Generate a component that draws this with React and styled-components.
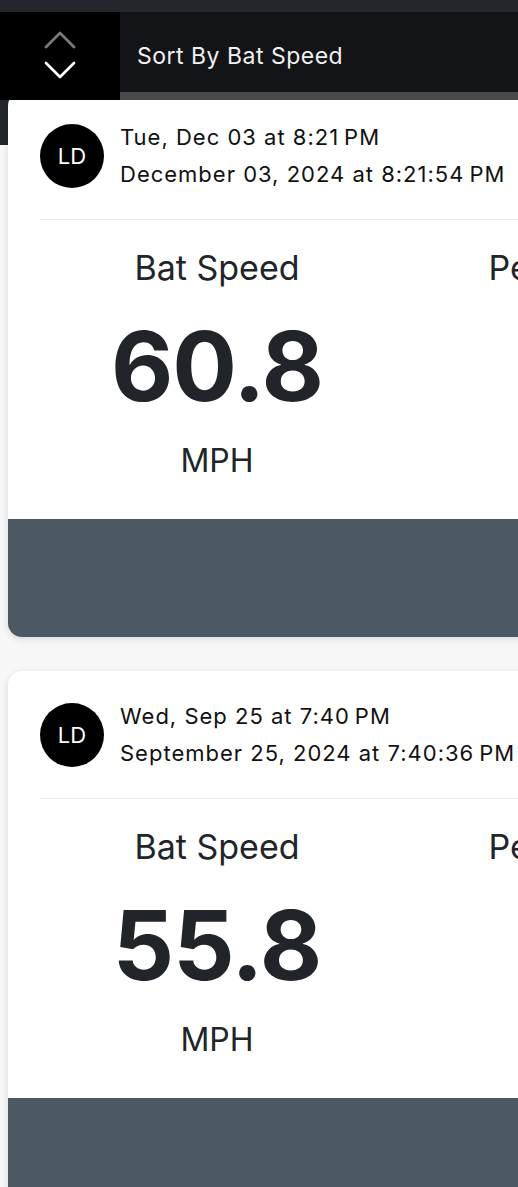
import React from 'react';
import styled, { createGlobalStyle } from 'styled-components';

const GlobalStyle = createGlobalStyle`
  html, body {
    margin: 0;
    padding: 0;
    background: #f7f7f7;
    overflow-x: hidden;
  }
  body {
    font-family: "Inter", "Noto Sans", sans-serif;
  }
`;

const Header = styled.header`
  position: sticky;
  top: 0;
  z-index: 2;
`;

const TopStrip = styled.div`
  height: 12px;
  background: #23272b;
`;

const SortBar = styled.div`
  display: flex;
  height: 88px;
`;

const SortToggle = styled.button`
  width: 120px;
  flex: none;
  border: 0;
  padding: 0;
  background: #000;
  display: flex;
  align-items: center;
  justify-content: center;
`;

const SortLabel = styled.div`
  flex: 1;
  box-sizing: border-box;
  display: flex;
  align-items: center;
  padding: 8px 0 0 17px;
  background: #131417;
  border-bottom: 8px solid #48494c;
  color: #f1f1f1;
  font-size: 23px;
  letter-spacing: 0.5px;
`;

const List = styled.main`
  margin-top: -8px;
  padding-bottom: 40px;
  background: linear-gradient(#23272b 0 53px, #f7f7f7 53px);
`;

const Card = styled.section`
  width: 770px;
  margin: 0 0 34px 8px;
  background: #fff;
  border-radius: 14px;
  overflow: hidden;
  box-shadow: 0 2px 7px rgba(0, 0, 0, 0.12);
`;

const CardHeader = styled.div`
  display: flex;
  align-items: center;
  gap: 16px;
  margin: 0 32px;
  padding: 27px 0 26px;
  border-bottom: 1px solid #ececec;
`;

const Avatar = styled.div`
  width: 64px;
  height: 64px;
  flex: none;
  border-radius: 50%;
  background: #000;
  color: #fff;
  display: flex;
  align-items: center;
  justify-content: center;
  font-size: 22px;
`;

const DateBlock = styled.div`
  font-size: 22px;
  line-height: 37px;
  letter-spacing: 1px;
  color: #111;
  white-space: nowrap;
`;

const StatsRow = styled.div`
  display: grid;
  grid-template-columns: 354px 354px;
  column-gap: 61px;
  padding: 24px 32px 34px;
`;

const Stat = styled.div`
  text-align: center;
  color: #212529;
  white-space: nowrap;
`;

const StatLabel = styled.div`
  font-size: 34px;
  line-height: 48px;
`;

const StatValue = styled.div`
  margin-top: 24px;
  font-size: 96px;
  line-height: 100px;
  font-weight: 700;
  letter-spacing: -1px;
`;

const StatUnit = styled.div`
  margin-top: 21px;
  font-size: 32px;
  line-height: 48px;
`;

const CardFooter = styled.div`
  height: 118px;
  background: #4a5963;
`;

function SortIcon() {
  return (
    <svg width="34" height="50" viewBox="0 0 34 50" fill="none" strokeWidth="2.8" strokeLinecap="round" strokeLinejoin="round">
      <polyline points="3,16 17,2 31,16" stroke="#7a7a7a" />
      <polyline points="3,32 17,46 31,32" stroke="#fff" />
    </svg>
  );
}

const swings = [
  {
    id: 1,
    initials: 'LD',
    short: 'Tue, Dec 03 at 8:21\u202FPM',
    long: 'December 03, 2024 at 8:21:54\u202FPM',
    batSpeed: '60.8',
  },
  {
    id: 2,
    initials: 'LD',
    short: 'Wed, Sep 25 at 7:40\u202FPM',
    long: 'September 25, 2024 at 7:40:36\u202FPM',
    batSpeed: '55.8',
  },
];

function SwingCard({ swing }) {
  return (
    <Card>
      <CardHeader>
        <Avatar>{swing.initials}</Avatar>
        <DateBlock>
          <div>{swing.short}</div>
          <div>{swing.long}</div>
        </DateBlock>
      </CardHeader>
      <StatsRow>
        <Stat>
          <StatLabel>Bat Speed</StatLabel>
          <StatValue>{swing.batSpeed}</StatValue>
          <StatUnit>MPH</StatUnit>
        </Stat>
        <Stat>
          <StatLabel>Peak Hand Speed</StatLabel>
        </Stat>
      </StatsRow>
      <CardFooter />
    </Card>
  );
}

export default function App() {
  return (
    <>
      <GlobalStyle />
      <Header>
        <TopStrip />
        <SortBar>
          <SortToggle aria-label="Toggle sort order">
            <SortIcon />
          </SortToggle>
          <SortLabel>Sort By Bat Speed</SortLabel>
        </SortBar>
      </Header>
      <List>
        {swings.map((swing) => (
          <SwingCard key={swing.id} swing={swing} />
        ))}
      </List>
    </>
  );
}
